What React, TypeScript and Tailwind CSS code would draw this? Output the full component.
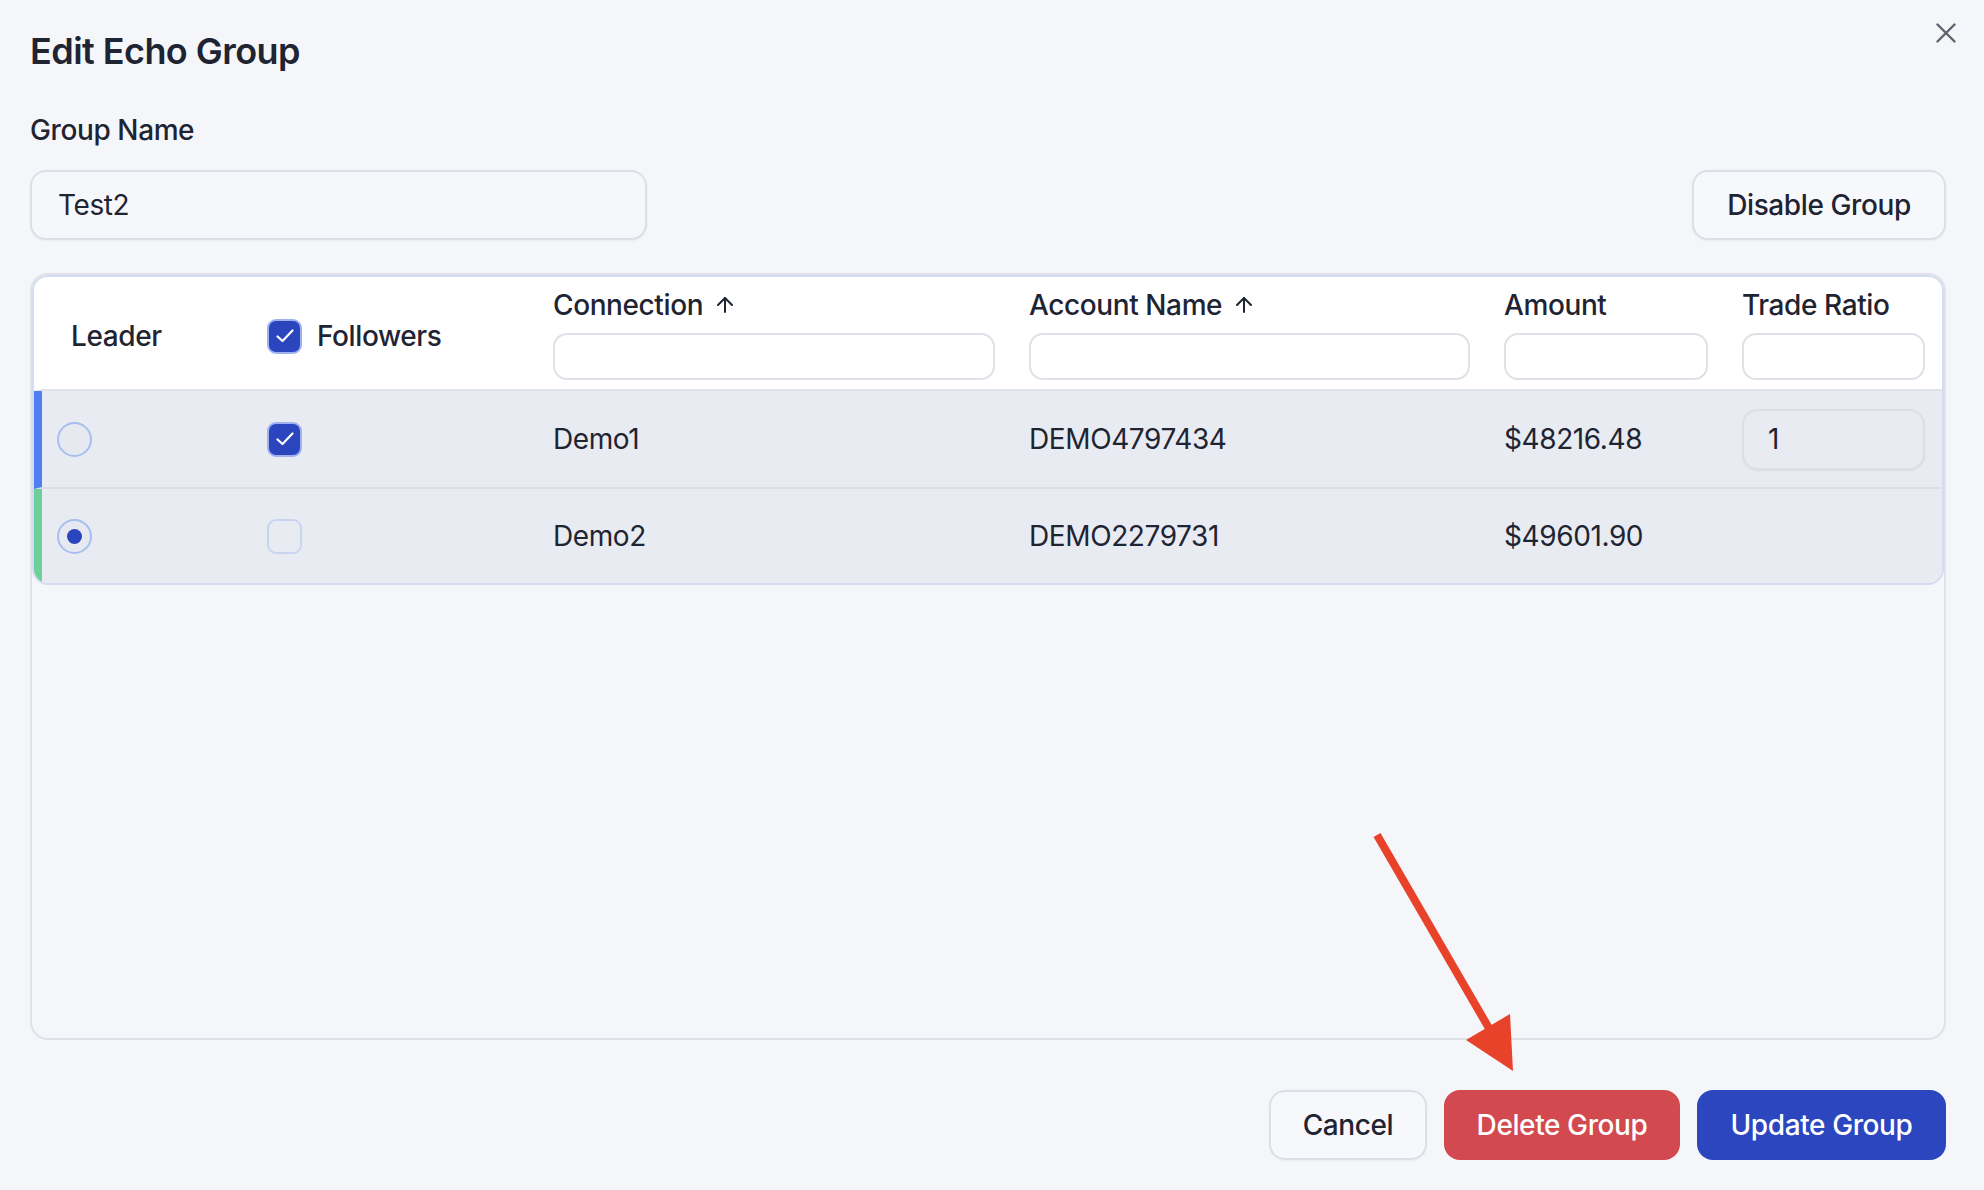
import React from 'react';
import { ArrowUp } from 'lucide-react';

const cols = 'grid grid-cols-[225px_286px_476px_475px_238px_200px]';

function Check({ on }: { on: boolean }) {
    return (
        <div className={on
            ? 'w-[35px] h-[35px] rounded-[9px] border-2 border-[#9db2ef] bg-[#2b45bf] flex items-center justify-center'
            : 'w-[35px] h-[35px] rounded-[9px] border-2 border-[#c9d4f3] bg-[#e8ebf1]'}>
            {on && (
                <svg width="22" height="22" viewBox="0 0 22 22" fill="none">
                    <polyline points="3.5 11.5 8.5 16 18.5 5.5" stroke="white" strokeWidth="2.2" strokeLinecap="round" strokeLinejoin="round"/>
                </svg>
            )}
        </div>
    )
}

function Radio({ on }: { on: boolean }) {
    return (
        <div className="w-[35px] h-[35px] rounded-full border-2 border-[#a9bdf0] bg-[#e6e9f0] flex items-center justify-center">
            {on && <div className="w-[15px] h-[15px] rounded-full bg-[#2b45bf]"/>}
        </div>
    )
}

function HeadCol({ title, sort, last }: { title: string, sort?: boolean, last?: boolean }) {
    return (
        <div className={last ? 'flex flex-col pt-[10px] pr-[17px]' : 'flex flex-col pt-[10px] pr-[34px]'}>
            <div className="h-[36px] flex items-center gap-[10px] text-[28px] font-medium">
                <span>{title}</span>
                {sort && <ArrowUp size={24} strokeWidth={2}/>}
            </div>
            <div className="mt-[10px] h-[47px] w-full rounded-[14px] border-2 border-[#dde1e8] bg-white"/>
        </div>
    )
}

function Row({ bar, leader, follower, conn, acct, amount, ratio, last }: {
    bar: string, leader: boolean, follower: boolean, conn: string, acct: string, amount: string, ratio?: string, last?: boolean
}) {
    return (
        <div className={`${cols} border-l-[8px] ${bar} bg-[#e8ebf1] ${last ? 'h-[94px]' : 'h-[98px] border-b-2 border-b-[#dcdfe6]'} items-center text-[28px]`}>
            <div className="pl-[15px]"><Radio on={leader}/></div>
            <div><Check on={follower}/></div>
            <div>{conn}</div>
            <div>{acct}</div>
            <div>{amount}</div>
            <div className="pr-[17px]">
                {ratio && (
                    <div className="h-[61px] rounded-[16px] border-2 border-[#dcdfe6] bg-[#e8ebf1] shadow-[0_1px_2px_rgba(0,0,0,0.06)] flex items-center pl-[24px]">
                        {ratio}
                    </div>
                )}
            </div>
        </div>
    )
}

export default function App() {
    return (
        <div className="relative w-[1984px] h-[1190px] overflow-hidden bg-[#f5f6fa] font-['Inter',sans-serif] tracking-[-0.4px] text-[#1f2433] pl-[30px] pr-[38px] flex flex-col">
            <h1 className="mt-[29px] h-[44px] leading-[44px] text-[36px] font-semibold tracking-[-0.55px]">Edit Echo Group</h1>
            <button className="absolute top-[23px] right-[28px] w-[20px] h-[20px] text-[#5d6270]">
                <svg width="20" height="20" viewBox="0 0 20 20" fill="none">
                    <path d="M1.5 1.5 18.5 18.5M18.5 1.5 1.5 18.5" stroke="currentColor" strokeWidth="2.4" strokeLinecap="round"/>
                </svg>
            </button>

            <div className="mt-[37px] flex justify-between items-end">
                <div>
                    <div className="h-[40px] leading-[40px] text-[28px] font-medium">Group Name</div>
                    <div className="mt-[20px] w-[617px] h-[70px] rounded-[16px] border-2 border-[#dcdfe6] bg-[#f6f7fb] shadow-[0_1px_2px_rgba(0,0,0,0.05)] flex items-center pl-[26px] text-[28px]">
                        Test2
                    </div>
                </div>
                <button className="w-[254px] h-[70px] rounded-[16px] border-2 border-[#dcdfe6] bg-[#f7f8fb] shadow-[0_1px_2px_rgba(0,0,0,0.05)] text-[28px] font-medium">
                    Disable Group
                </button>
            </div>

            <div className="mt-[33px] h-[767px] rounded-[18px] border-2 border-[#dfe2e9]">
                <div className="rounded-[16px] border-2 border-[#d5dcf1] overflow-hidden">
                    <div className={`${cols} h-[114px] border-l-[8px] border-l-transparent bg-white border-b-2 border-b-[#dfe2e9]`}>
                        <div className="pl-[29px] pt-[6px] flex items-center text-[28px] font-medium">Leader</div>
                        <div className="pt-[6px] flex items-center gap-[15px] text-[28px] font-medium">
                            <Check on={true}/>
                            <span>Followers</span>
                        </div>
                        <HeadCol title="Connection" sort/>
                        <HeadCol title="Account Name" sort/>
                        <HeadCol title="Amount"/>
                        <HeadCol title="Trade Ratio" last/>
                    </div>
                    <Row bar="border-l-[#4f80f0]" leader={false} follower={true} conn="Demo1" acct="DEMO4797434" amount="$48216.48" ratio="1"/>
                    <Row bar="border-l-[#6dd09b]" leader={true} follower={false} conn="Demo2" acct="DEMO2279731" amount="$49601.90" last/>
                </div>
            </div>

            <div className="mt-[50px] flex justify-end gap-[17px]">
                <button className="w-[158px] h-[70px] rounded-[16px] border-2 border-[#dcdfe6] bg-[#f7f8fb] shadow-[0_1px_2px_rgba(0,0,0,0.05)] text-[28px] font-medium">
                    Cancel
                </button>
                <button className="w-[236px] h-[70px] rounded-[16px] bg-[#d2494f] text-white text-[28px] font-medium">
                    Delete Group
                </button>
                <button className="w-[249px] h-[70px] rounded-[16px] bg-[#2b46bf] text-white text-[28px] font-medium">
                    Update Group
                </button>
            </div>

            {/* annotation arrow */}
            <svg className="absolute left-0 top-0 pointer-events-none" width="1984" height="1190">
                <line x1="1377" y1="835" x2="1490" y2="1030" stroke="#e8432a" strokeWidth="8"/>
                <polygon points="1513,1071 1466,1040 1510,1014" fill="#e8432a"/>
            </svg>
        </div>
    );
}
